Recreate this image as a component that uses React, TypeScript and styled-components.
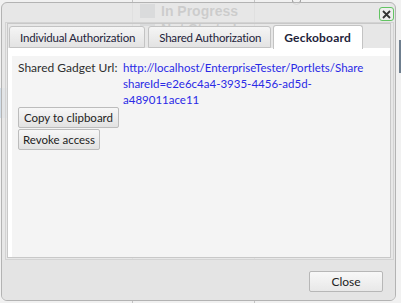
import React from "react";
import styled, { createGlobalStyle } from "styled-components";

const Global = createGlobalStyle`
  html, body { margin: 0; padding: 0; }
  body { background: #ececec; font-family: Lato, "Noto Sans", sans-serif; font-size: 12px; }
`;

const Page = styled.div`
  position: relative;
  width: 401px;
  height: 303px;
  overflow: hidden;
  background: #f1f1f1;
`;

/* ---------- page behind the dialog ---------- */
const Backdrop = styled.div`
  display: grid;
  grid-template-columns: 133px 122px 1fr;
  height: 100%;
`;
const LeftCol = styled.div`
  border-right: 1px solid #c4c4c4;
  padding-top: 88px;
`;
const RowBand = styled.div`
  height: 30px;
  background: #d3dfea;
`;
const MidCol = styled.div`
  border-right: 1px solid #c4c4c4;
`;
const StatusList = styled.div`
  height: 26px;
  overflow: hidden;
  padding: 4px 0 0 7px;
  box-sizing: border-box;
  display: flex;
  flex-direction: column;
  gap: 4px;
`;
const StatusRow = styled.div`
  display: flex;
  align-items: center;
  gap: 6px;
  height: 14px;
  flex: none;
  font: bold 14px "Liberation Sans", Arial, sans-serif;
  color: #4e4e4e;
  white-space: nowrap;
`;
const StatusIcon = styled.span`
  width: 15px;
  height: 14px;
  background: #a2a8ae;
`;
const RightCol = styled.div`
  display: flex;
  flex-direction: column;
`;
const Ring = styled.div`
  width: 7px;
  height: 7px;
  margin: -4px 0 0 37px;
  border: 1px solid #8a8a8a;
  border-radius: 50%;
`;
const EdgeBar = styled.div`
  align-self: flex-end;
  width: 2px;
  height: 33px;
  margin-top: 35px;
  background: #6f7f8f;
`;

/* ---------- dialog ---------- */
const Dialog = styled.div`
  position: absolute;
  left: 1px;
  top: 2px;
  width: 395px;
  height: 299px;
  box-sizing: border-box;
  border: 1px solid #b3b3b3;
  border-radius: 6px;
  overflow: hidden;
  display: flex;
  flex-direction: column;
  background: rgba(229, 229, 229, 0.84);
`;
const TitleBar = styled.div`
  height: 19px;
  box-sizing: border-box;
  display: flex;
  justify-content: flex-end;
  align-items: flex-start;
  padding: 4px 1px 0 0;
`;
const CloseX = styled.button`
  width: 15px;
  height: 14px;
  padding: 0;
  box-sizing: border-box;
  border: 1px solid #62c462;
  border-radius: 3px;
  background: #eeeeee;
  display: flex;
  align-items: center;
  justify-content: center;
`;
const Frame = styled.div`
  height: 238px;
  box-sizing: border-box;
  margin: 0 1px 0 3px;
  border: 1px solid #d3d3d3;
  padding: 0 2px 1px 1px;
  display: flex;
`;
const Tabs = styled.div`
  flex: 1;
  border: 1px solid #c8c8c8;
  display: flex;
  flex-direction: column;
`;
const TabNav = styled.div`
  display: flex;
  align-items: flex-start;
  gap: 3px;
  height: 22px;
  padding: 2px 0 0 1px;
`;
const Tab = styled.div<{ $active?: boolean }>`
  height: ${(p) => (p.$active ? "24px" : "22px")};
  box-sizing: border-box;
  margin-top: ${(p) => (p.$active ? "-1px" : "0")};
  margin-left: ${(p) => (p.$active ? "-1px" : "0")};
  padding: ${(p) => (p.$active ? "0 11px 0 10px" : "0 9px 0 10px")};
  display: flex;
  align-items: center;
  border: 1px solid #c3c3c3;
  border-bottom: ${(p) => (p.$active ? "none" : "1px solid #c3c3c3")};
  border-radius: 3px 3px 0 0;
  background: ${(p) =>
    p.$active ? "#ffffff" : "linear-gradient(#f5f5f5, #e3e3e3)"};
  font-size: ${(p) => (p.$active ? "12px" : "11.5px")};
  letter-spacing: ${(p) => (p.$active ? "0.2px" : "-0.2px")};
  font-weight: ${(p) => (p.$active ? 700 : 400)};
  color: #23233a;
  white-space: nowrap;
  position: relative;
  z-index: ${(p) => (p.$active ? 1 : 0)};
`;
const Panel = styled.div`
  flex: 1;
  background: #ffffff;
  padding: 8px 0 0 4px;
  display: flex;
`;
const Content = styled.div`
  flex: 1;
  background: #f4f4f4;
  padding: 4px 6px;
  display: flex;
  flex-direction: column;
  align-items: flex-start;
`;
const UrlRow = styled.div`
  display: grid;
  grid-template-columns: 105px 1fr;
  line-height: 16px;
  margin-bottom: -1px;
`;
const Label = styled.span`
  color: #2e2e2e;
  font-size: 12px;
  white-space: nowrap;
`;
const UrlLink = styled.a`
  color: #2a2ae6;
  font-size: 11.5px;
  text-decoration: none;
  white-space: nowrap;
`;
const ActionButton = styled.button<{ $w: number }>`
  width: ${(p) => p.$w}px;
  height: 21px;
  box-sizing: border-box;
  padding: 0;
  margin-bottom: 1px;
  border: 1px solid #bcbcbc;
  border-radius: 2px;
  background: linear-gradient(#f7f7f7, #e2e2e2);
  font-family: Lato, "Noto Sans", sans-serif;
  font-size: 11.5px;
  color: #222;
  white-space: nowrap;
`;
const ButtonPane = styled.div`
  flex: 1;
  display: flex;
  justify-content: flex-end;
  align-items: flex-start;
  padding: 11px 12px 0 0;
  background: #e4e4e4;
`;
const CloseButton = styled.button`
  width: 74px;
  height: 21px;
  border: 1px solid #b7b7b7;
  border-radius: 2px;
  background: linear-gradient(#f8f8f8, #e8e8e8);
  font-family: Lato, "Noto Sans", sans-serif;
  font-size: 12px;
  color: #222;
`;

export default function App() {
  return (
    <Page>
      <Global />
      <Backdrop>
        <LeftCol>
          <RowBand />
        </LeftCol>
        <MidCol>
          <StatusList>
            <StatusRow>
              <StatusIcon />
              In Progress
            </StatusRow>
            <StatusRow>
              <StatusIcon />
              Not Started
            </StatusRow>
          </StatusList>
        </MidCol>
        <RightCol>
          <Ring />
          <EdgeBar />
        </RightCol>
      </Backdrop>

      <Dialog>
        <TitleBar>
          <CloseX aria-label="close">
            <svg width="9" height="9" viewBox="0 0 9 9">
              <path d="M1 1L8 8M8 1L1 8" stroke="#333" strokeWidth="1.8" />
            </svg>
          </CloseX>
        </TitleBar>
        <Frame>
          <Tabs>
            <TabNav>
              <Tab>Individual Authorization</Tab>
              <Tab>Shared Authorization</Tab>
              <Tab $active>Geckoboard</Tab>
            </TabNav>
            <Panel>
              <Content>
                <UrlRow>
                  <Label>Shared Gadget Url:</Label>
                  <UrlLink href="#">
                    http://localhost/EnterpriseTester/Portlets/Share
                    <br />
                    shareId=e2e6c4a4-3935-4456-ad5d-
                    <br />
                    a489011ace11
                  </UrlLink>
                </UrlRow>
                <ActionButton $w={101}>Copy to clipboard</ActionButton>
                <ActionButton $w={82}>Revoke access</ActionButton>
              </Content>
            </Panel>
          </Tabs>
        </Frame>
        <ButtonPane>
          <CloseButton>Close</CloseButton>
        </ButtonPane>
      </Dialog>
    </Page>
  );
}
